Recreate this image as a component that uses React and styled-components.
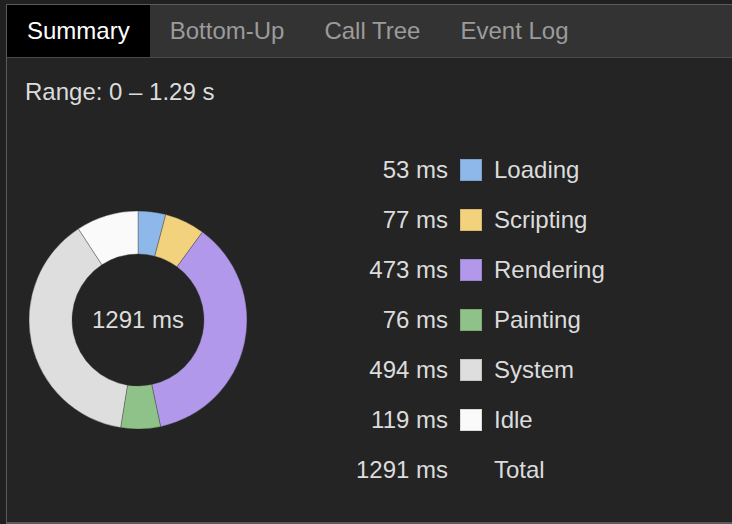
import React from "react";
import styled, { createGlobalStyle } from "styled-components";

const Global = createGlobalStyle`
  html, body { margin: 0; padding: 0; background: #202020; }
  body { font-family: "Liberation Sans", Arial, Helvetica, sans-serif; }
  * { box-sizing: border-box; }
`;

const Frame = styled.div`
  width: 732px;
  height: 524px;
  padding: 4px 0 0 6px;
  background: #202020;
  overflow: hidden;
`;

const Panel = styled.div`
  height: 100%;
  display: flex;
  flex-direction: column;
  background: #242424;
  border-left: 1px solid #5a5a5a;
  border-top: 1px solid #5a5a5a;
  border-bottom: 2px solid #5a5a5a;
`;

const TabBar = styled.div`
  display: flex;
  height: 53px;
  background: #333333;
  border-bottom: 1px solid #4a4a4a;
`;

const Tab = styled.div`
  display: flex;
  align-items: center;
  padding: 0 20px;
  font-size: 24px;
  color: ${(p) => (p.$active ? "#ffffff" : "#9b9b9b")};
  background: ${(p) => (p.$active ? "#000000" : "transparent")};
`;

const Content = styled.div`
  flex: 1;
  padding: 20px 18px 0 18px;
  display: flex;
  flex-direction: column;
`;

const Range = styled.div`
  font-size: 24px;
  line-height: 28px;
  color: #dcdcdc;
`;

const Body = styled.div`
  display: flex;
  align-items: center;
  margin-top: 39px;
  padding-left: 4px;
`;

const Donut = styled.div`
  position: relative;
  width: 218px;
  height: 218px;
  flex: none;
`;

const DonutLabel = styled.div`
  position: absolute;
  inset: 0;
  display: flex;
  align-items: center;
  justify-content: center;
  font-size: 24px;
  color: #dcdcdc;
`;

const Legend = styled.div`
  display: grid;
  grid-template-columns: 101px 22px auto;
  column-gap: 12px;
  margin-left: 100px;
`;

const Value = styled.div`
  height: 50px;
  display: flex;
  align-items: center;
  justify-content: flex-end;
  font-size: 24px;
  color: #dcdcdc;
  white-space: nowrap;
`;

const SwatchCell = styled.div`
  height: 50px;
  display: flex;
  align-items: center;
`;

const Swatch = styled.div`
  width: 22px;
  height: 22px;
  background: ${(p) => p.$color};
  border: 1px solid rgba(0, 0, 0, 0.12);
`;

const Label = styled.div`
  height: 50px;
  display: flex;
  align-items: center;
  font-size: 24px;
  color: #dcdcdc;
  white-space: nowrap;
`;

const data = [
  { name: "Loading", value: 53, color: "#8fb8ea" },
  { name: "Scripting", value: 77, color: "#f3d27e" },
  { name: "Rendering", value: 473, color: "#b198eb" },
  { name: "Painting", value: 76, color: "#8fc288" },
  { name: "System", value: 494, color: "#dedede" },
  { name: "Idle", value: 119, color: "#fafafa" },
];

function arcPath(cx, cy, r1, r2, a0, a1) {
  const p = (r, a) => [cx + r * Math.cos(a), cy + r * Math.sin(a)];
  const large = a1 - a0 > Math.PI ? 1 : 0;
  const [x0, y0] = p(r2, a0);
  const [x1, y1] = p(r2, a1);
  const [x2, y2] = p(r1, a1);
  const [x3, y3] = p(r1, a0);
  return `M${x0} ${y0} A${r2} ${r2} 0 ${large} 1 ${x1} ${y1} L${x2} ${y2} A${r1} ${r1} 0 ${large} 0 ${x3} ${y3} Z`;
}

function DonutChart() {
  const total = data.reduce((s, d) => s + d.value, 0);
  let a = -Math.PI / 2;
  return (
    <svg width="218" height="218" viewBox="0 0 218 218">
      {data.map((d) => {
        const a0 = a;
        const a1 = a + (d.value / total) * Math.PI * 2;
        a = a1;
        return (
          <path
            key={d.name}
            d={arcPath(109, 109, 66, 109, a0, a1)}
            fill={d.color}
            stroke="rgba(60,60,60,0.6)"
            strokeWidth="0.6"
          />
        );
      })}
    </svg>
  );
}

export default function App() {
  const tabs = ["Summary", "Bottom-Up", "Call Tree", "Event Log"];
  return (
    <>
      <Global />
      <Frame>
        <Panel>
          <TabBar>
            {tabs.map((t, i) => (
              <Tab key={t} $active={i === 0}>
                {t}
              </Tab>
            ))}
          </TabBar>
          <Content>
            <Range>Range: 0 – 1.29 s</Range>
            <Body>
              <Donut>
                <DonutChart />
                <DonutLabel>1291 ms</DonutLabel>
              </Donut>
              <Legend>
                {data.map((d) => (
                  <React.Fragment key={d.name}>
                    <Value>{d.value} ms</Value>
                    <SwatchCell>
                      <Swatch $color={d.color} />
                    </SwatchCell>
                    <Label>{d.name}</Label>
                  </React.Fragment>
                ))}
                <Value>1291 ms</Value>
                <SwatchCell />
                <Label>Total</Label>
              </Legend>
            </Body>
          </Content>
        </Panel>
      </Frame>
    </>
  );
}
